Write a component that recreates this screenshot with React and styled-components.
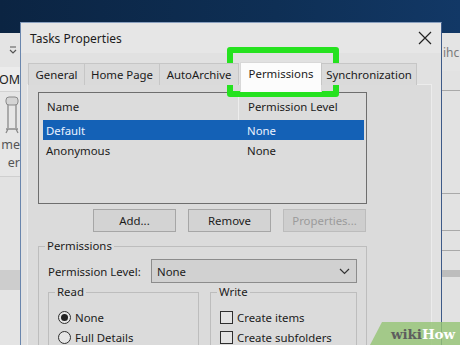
import React from "react"
import styled, { createGlobalStyle } from "styled-components"

const GlobalStyle = createGlobalStyle`
  html, body {
    margin: 0;
    padding: 0;
    width: 460px;
    height: 345px;
    overflow: hidden;
  }
  body {
    font-family: "Noto Sans", "Open Sans", sans-serif;
    color: #1b1b1b;
  }
`

const Screen = styled.div`
  position: relative;
  width: 460px;
  height: 345px;
  overflow: hidden;
`

const Desktop = styled.div`
  display: flex;
  align-items: flex-start;
  height: 345px;
  padding-top: 22px;
  box-sizing: border-box;
  background: linear-gradient(90deg, #0b2442, #0e2f55 60%, #123866);
`

const SideStrip = styled.div`
  width: ${(p) => p.width}px;
  flex-shrink: 0;
  margin-top: 11px;
  background: #e4e4e4;
  display: flex;
  flex-direction: column;
  overflow: hidden;
  font-size: 12px;
  color: #333;
  & > * {
    flex-shrink: 0;
  }
`

const QatRow = styled.div`
  height: 34px;
  display: flex;
  align-items: center;
  justify-content: flex-end;
  padding-right: 3px;
`

const RibbonTabs = styled.div`
  height: 24px;
  display: flex;
  align-items: center;
  justify-content: flex-end;
  font-size: 12.5px;
  color: #222;
  background: #ececec;
  border-bottom: 1px solid #d2d2d2;
`

const Ribbon = styled.div`
  height: 85px;
  background: #e6e6e6;
  border-bottom: 1px solid #cfcfcf;
  display: flex;
  flex-direction: column;
  align-items: flex-end;
  padding-top: 4px;
  box-sizing: border-box;
  color: #555;
  font-size: 12.5px;
  line-height: 18px;
`

const RibbonIcon = styled.div`
  height: 40px;
  display: flex;
  align-items: flex-start;
  padding-right: 1px;
`

const Filler = styled.div`
  height: ${(p) => p.h}px;
  background: ${(p) => p.bg || "#e2e2e2"};
  border-bottom: ${(p) => (p.line ? "1px solid #a9a9a9" : "none")};
`

const RightText = styled.div`
  height: 38px;
  display: flex;
  align-items: center;
  padding-left: 1px;
  font-size: 12px;
  color: #7a7a7a;
  white-space: nowrap;
`

const Dialog = styled.div`
  width: 422px;
  height: 330px;
  flex-shrink: 0;
  background: #e1e1e1;
  border-left: 1px solid #6a86ad;
  border-right: 1px solid #3d5a88;
  border-top: 1px solid #8aa0bf;
  box-sizing: border-box;
  display: flex;
  flex-direction: column;
  & > * {
    flex-shrink: 0;
  }
`

const TitleBar = styled.div`
  height: 30px;
  display: flex;
  align-items: center;
  justify-content: space-between;
  padding: 0 9px 0 9px;
  background: #e6e6e6;
  font-size: 12px;
`

const Body = styled.div`
  padding: 9px 9px 0 6px;
  display: flex;
  flex-direction: column;
`

const TabStrip = styled.div`
  display: flex;
  align-items: flex-end;
  padding-left: 2px;
  position: relative;
  z-index: 1;
  margin-bottom: -1px;
`

const Tab = styled.div`
  height: ${(p) => (p.active ? 30 : 22)}px;
  margin-bottom: ${(p) => (p.active ? -7 : 0)}px;
  width: ${(p) => p.w}px;
  margin-left: ${(p) => (p.active ? 1 : -1)}px;
  box-sizing: border-box;
  border: 1px solid ${(p) => (p.active ? "#d8d8d8" : "#c6c6c6")};
  border-bottom: none;
  background: ${(p) => (p.active ? "#fcfcfc" : "#dadada")};
  display: flex;
  align-items: ${(p) => (p.active ? "flex-start" : "center")};
  padding-top: ${(p) => (p.active ? 3 : 0)}px;
  justify-content: center;
  font-size: 11.4px;
  white-space: nowrap;
`

const Panel = styled.div`
  min-height: 280px;
  background: #dbdbdb;
  border: 1px solid #ececec;
  padding: 7px 0 0 10px;
  display: flex;
  flex-direction: column;
  font-size: 11.4px;
`

const ListBox = styled.div`
  width: 329px;
  height: 112px;
  box-sizing: border-box;
  border: 1px solid #6e6e6e;
  background: #dcdcdc;
`

const ListHeader = styled.div`
  display: grid;
  grid-template-columns: 199px 1fr;
  height: 27px;
  align-items: stretch;
`

const HeadCell = styled.div`
  display: flex;
  align-items: center;
  padding-left: ${(p) => (p.divider ? 9 : 8)}px;
  border-left: ${(p) => (p.divider ? "1px solid #ededed" : "none")};
`

const Row = styled.div`
  display: grid;
  grid-template-columns: 201px 1fr;
  height: 20px;
  margin-left: 4px;
  width: 321px;
  align-items: center;
  background: ${(p) => (p.selected ? "#1461b6" : "transparent")};
  color: ${(p) => (p.selected ? "#eaf2ff" : "#1b1b1b")};
`

const Cell = styled.div`
  padding-left: 3px;
`

const ButtonRow = styled.div`
  width: 329px;
  display: flex;
  justify-content: flex-end;
  gap: 12px;
  margin-top: 5px;
  padding-right: 1px;
  box-sizing: border-box;
`

const Button = styled.div`
  width: 83px;
  height: 23px;
  box-sizing: border-box;
  border: 1px solid ${(p) => (p.disabled ? "#bcbcbc" : "#a6a6a6")};
  background: ${(p) => (p.disabled ? "#cecece" : "#d3d3d3")};
  color: ${(p) => (p.disabled ? "#9b9b9b" : "#1b1b1b")};
  display: flex;
  align-items: center;
  justify-content: center;
`

const Group = styled.fieldset`
  margin: ${(p) => p.mt || 0}px 0 0 0;
  padding: 0 9px 12px 9px;
  border: 1px solid #bdbdbd;
  width: ${(p) => (p.w ? `${p.w}px` : "auto")};
  flex: ${(p) => (p.w ? "none" : 1)};
  box-sizing: border-box;
  min-width: 0;
`

const Legend = styled.legend`
  padding: 0 2px;
  margin-left: -3px;
  line-height: 16px;
`

const LevelRow = styled.div`
  display: flex;
  align-items: center;
  margin-top: 5px;
`

const LevelLabel = styled.div`
  width: 103px;
  flex-shrink: 0;
`

const Select = styled.div`
  flex: 1;
  height: 24px;
  box-sizing: border-box;
  border: 1px solid #8c8c8c;
  background: #d1d1d1;
  display: flex;
  align-items: center;
  justify-content: space-between;
  padding: 0 6px 0 5px;
`

const SubGroups = styled.div`
  display: flex;
  gap: 11px;
  margin-top: 1px;
`

const OptionRow = styled.div`
  display: flex;
  align-items: center;
  gap: 4px;
  height: 20px;
  margin-top: ${(p) => (p.first ? 7 : 0)}px;
  white-space: nowrap;
`

const Radio = styled.span`
  width: 13px;
  height: 13px;
  box-sizing: border-box;
  border-radius: 50%;
  border: 1px solid #2e2e2e;
  background: #e6e6e6;
  display: flex;
  align-items: center;
  justify-content: center;
  flex-shrink: 0;
  &::after {
    content: "";
    width: 7px;
    height: 7px;
    border-radius: 50%;
    background: ${(p) => (p.checked ? "#222" : "transparent")};
  }
`

const Check = styled.span`
  width: 13px;
  height: 13px;
  box-sizing: border-box;
  border: 1px solid #2e2e2e;
  background: #e3e3e3;
  flex-shrink: 0;
`

const Highlight = styled.div`
  position: absolute;
  left: 227px;
  top: 47px;
  width: 112px;
  height: 50px;
  box-sizing: border-box;
  border: 6px solid #25e21f;
  border-radius: 3px;
`

const Watermark = styled.div`
  position: absolute;
  right: 0;
  bottom: 0;
  width: 90px;
  height: 23px;
  background: rgba(150, 196, 118, 0.82);
  clip-path: polygon(12px 0, 100% 0, 100% 100%, 0 100%);
  display: flex;
  align-items: center;
  justify-content: flex-end;
  padding-right: 5px;
  box-sizing: border-box;
  font-family: "DejaVu Serif", serif;
  font-weight: bold;
  font-size: 13.5px;
  letter-spacing: -0.1px;
`

const WikiPart = styled.span`
  color: ${(p) => (p.light ? "#ffffff" : "#5e5e5e")};
`

const CloseIcon = () => (
  <svg width="14" height="14" viewBox="0 0 14 14">
    <path d="M1 1 L13 13 M13 1 L1 13" stroke="#222" strokeWidth="1.2" fill="none" />
  </svg>
)

const Chevron = () => (
  <svg width="11" height="7" viewBox="0 0 11 7">
    <path d="M1 1 L5.5 5.5 L10 1" stroke="#333" strokeWidth="1.2" fill="none" />
  </svg>
)

const QatIcon = () => (
  <svg width="8" height="10" viewBox="0 0 8 10">
    <path d="M1 2 H7 M1 5 L4 8 L7 5" stroke="#555" strokeWidth="1.2" fill="none" />
  </svg>
)

const FolderIcon = () => (
  <svg width="14" height="38" viewBox="0 0 14 38">
    <rect x="1" y="1" width="12" height="8" rx="3" fill="#d4d4d4" stroke="#8a8a8a" />
    <path d="M3 9 V32 M11 9 V32 M1 33 H13 M3 33 L1 37 M11 33 L13 37" stroke="#8a8a8a" strokeWidth="1.3" fill="none" />
  </svg>
)

const tabs = [
  { label: "General", w: 57 },
  { label: "Home Page", w: 76 },
  { label: "AutoArchive", w: 80 },
  { label: "Permissions", w: 82, active: true },
  { label: "Synchronization", w: 96 },
]

const users = [
  { name: "Default", level: "None", selected: true },
  { name: "Anonymous", level: "None" },
]

const App = () => {
  return (
    <Screen>
      <GlobalStyle />
      <Desktop>
        <SideStrip width={20}>
          <QatRow>
            <QatIcon />
          </QatRow>
          <RibbonTabs>OM</RibbonTabs>
          <Ribbon>
            <RibbonIcon>
              <FolderIcon />
            </RibbonIcon>
            <div>me</div>
            <div>er</div>
          </Ribbon>
          <Filler h={93} />
          <Filler h={20} bg="#cdcdcd" />
          <Filler h={60} bg="#e4e4e4" />
        </SideStrip>

        <Dialog>
          <TitleBar>
            <span>Tasks Properties</span>
            <CloseIcon />
          </TitleBar>
          <Body>
            <TabStrip>
              {tabs.map((t) => (
                <Tab key={t.label} w={t.w} active={t.active}>
                  {t.label}
                </Tab>
              ))}
            </TabStrip>
            <Panel>
              <ListBox>
                <ListHeader>
                  <HeadCell>Name</HeadCell>
                  <HeadCell divider>Permission Level</HeadCell>
                </ListHeader>
                {users.map((u) => (
                  <Row key={u.name} selected={u.selected}>
                    <Cell>{u.name}</Cell>
                    <Cell>{u.level}</Cell>
                  </Row>
                ))}
              </ListBox>

              <ButtonRow>
                <Button>Add...</Button>
                <Button>Remove</Button>
                <Button disabled>Properties...</Button>
              </ButtonRow>

              <Group w={329} mt={6}>
                <Legend>Permissions</Legend>
                <LevelRow>
                  <LevelLabel>Permission Level:</LevelLabel>
                  <Select>
                    <span>None</span>
                    <Chevron />
                  </Select>
                </LevelRow>
                <SubGroups>
                  <Group w={151}>
                    <Legend>Read</Legend>
                    <OptionRow first>
                      <Radio checked />
                      None
                    </OptionRow>
                    <OptionRow>
                      <Radio />
                      Full Details
                    </OptionRow>
                  </Group>
                  <Group>
                    <Legend>Write</Legend>
                    <OptionRow first>
                      <Check />
                      Create items
                    </OptionRow>
                    <OptionRow>
                      <Check />
                      Create subfolders
                    </OptionRow>
                  </Group>
                </SubGroups>
              </Group>
            </Panel>
          </Body>
        </Dialog>

        <SideStrip width={18}>
          <RightText>ihc</RightText>
          <Filler h={19} line />
          <Filler h={102} line />
          <Filler h={36} line />
          <Filler h={19} line />
          <Filler h={19} />
          <Filler h={7} bg="#bdbdbd" />
          <Filler h={80} />
        </SideStrip>
      </Desktop>
      <Highlight />
      <Watermark>
        <WikiPart>wiki</WikiPart>
        <WikiPart light>How</WikiPart>
      </Watermark>
    </Screen>
  )
}

export default App
